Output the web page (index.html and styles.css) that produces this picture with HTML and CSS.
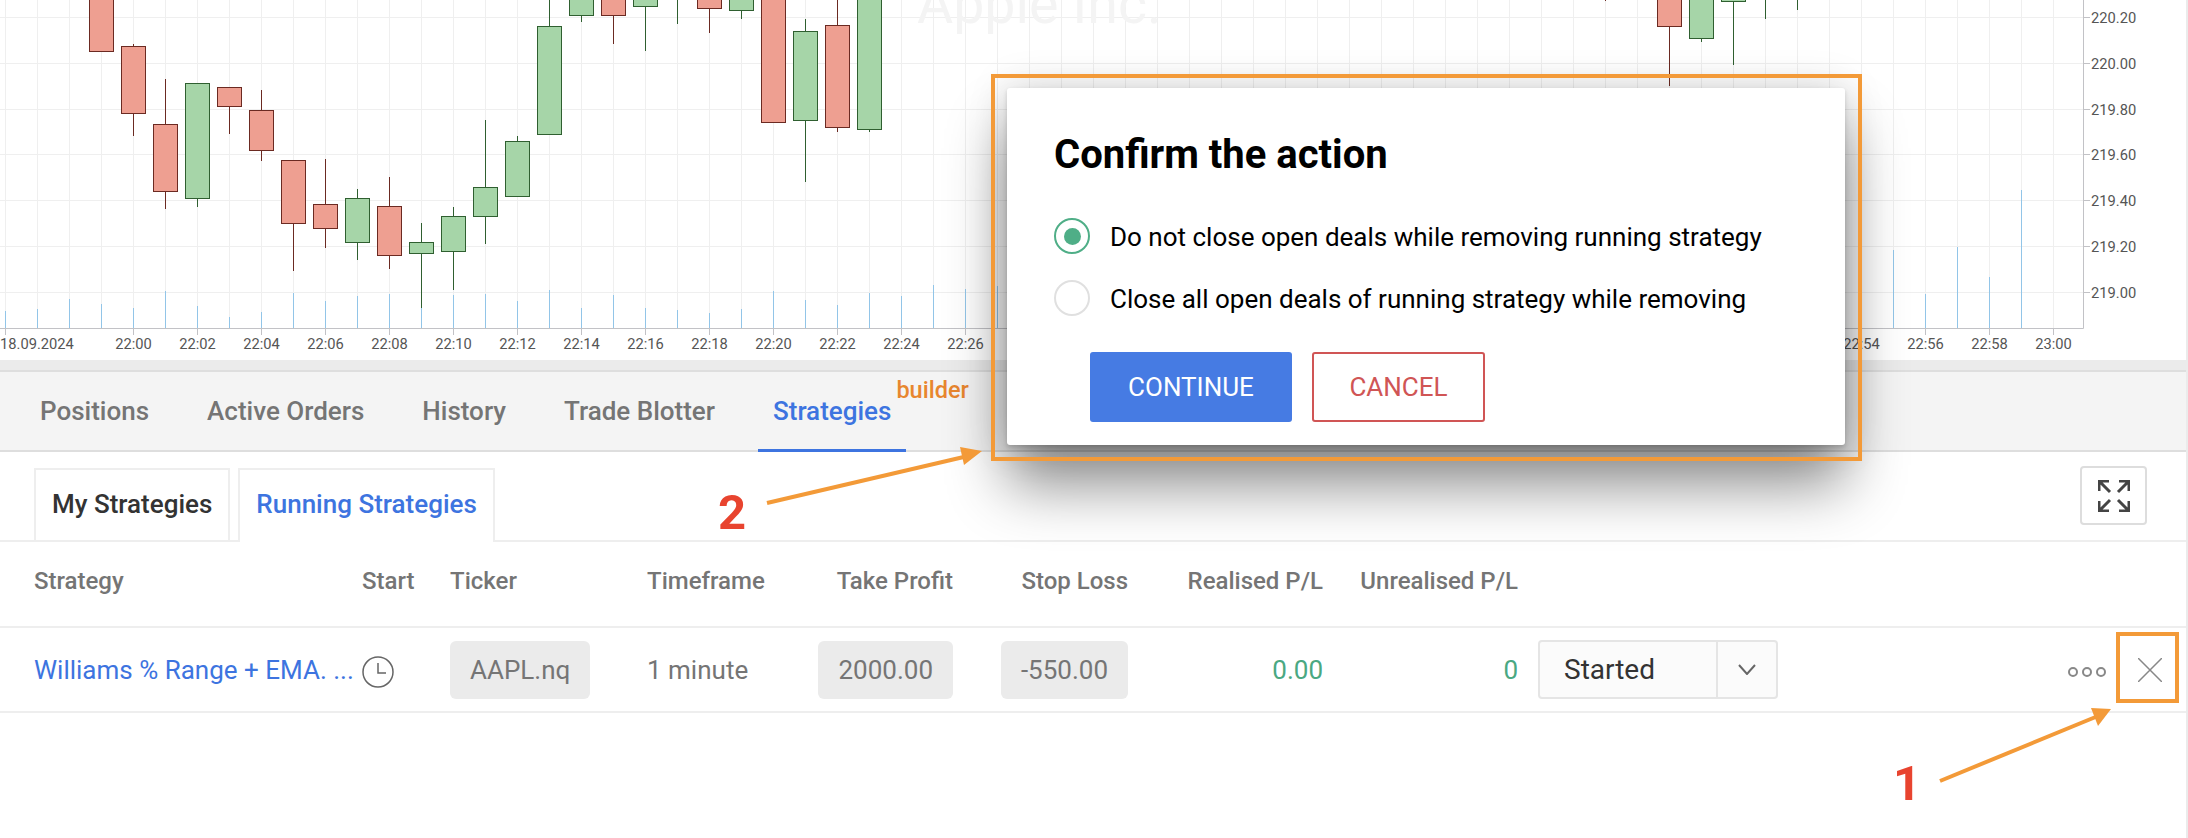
FILE: index.html
```html
<!DOCTYPE html>
<html lang="en">
<head>
    <meta charset="UTF-8">
    <title>Running Strategies</title>
    <link rel="stylesheet" href="styles.css">
</head>
<body>
    <section class="chart-panel">
        <svg class="chart" width="2186" height="360" viewBox="0 0 2186 360">
            <defs>
                <pattern id="grid-v" x="5" y="0" width="32" height="329" patternUnits="userSpaceOnUse">
                    <path class="grid" d="M.5 0V329"/>
                </pattern>
            </defs>
            <rect x="0" y="0" width="2083" height="328" fill="url(#grid-v)"/>
            <path class="grid" d="M0 17.5H2083M0 63.5H2083M0 109.5H2083M0 154.5H2083M0 200.5H2083M0 246.5H2083M0 292.5H2083"/>
            <text class="watermark" x="917" y="23">Apple Inc.</text>

            <path class="volume" d="M5.5 328V311M37.5 328V309M69.5 328V299M101.5 328V304M133.5 328V308M165.5 328V291M197.5 328V306M229.5 328V317M261.5 328V312M293.5 328V293M325.5 328V301M357.5 328V296M389.5 328V294M421.5 328V308M453.5 328V295M485.5 328V294M517.5 328V301M549.5 328V290M581.5 328V308M613.5 328V295M645.5 328V308M677.5 328V310M709.5 328V313M741.5 328V309M773.5 328V291M805.5 328V300M837.5 328V305M869.5 328V293M901.5 328V296M933.5 328V285M965.5 328V289M997.5 328V286M1893.5 328V250M1925.5 328V294M1957.5 328V247M1989.5 328V277M2021.5 328V190"/>

            <path class="wick-down" d="M133.5 44V136M165.5 79V209M229.5 88V134M261.5 90V161M293.5 161V271M325.5 159V248M389.5 177V269M613.5 0V44M709.5 0V33M837.5 0V132M1605.5 0V1M1669.5 0V86"/>
            <path class="wick-up" d="M197.5 84V207M357.5 189V260M421.5 223V308M453.5 207V290M485.5 120V244M517.5 136V142M549.5 0V27M581.5 0V22M645.5 0V51M677.5 0V24M741.5 0V19M805.5 19V182M869.5 0V132M1701.5 0V42M1733.5 0V65M1765.5 0V19M1797.5 0V10"/>

            <g class="candle-down">
                <rect x="89.5" y="-5" width="24" height="56.5"/>
                <rect x="121.5" y="46.5" width="24" height="67"/>
                <rect x="153.5" y="124.5" width="24" height="67"/>
                <rect x="217.5" y="87.5" width="24" height="19"/>
                <rect x="249.5" y="110.5" width="24" height="40"/>
                <rect x="281.5" y="160.5" width="24" height="63"/>
                <rect x="313.5" y="204.5" width="24" height="24"/>
                <rect x="377.5" y="206.5" width="24" height="49"/>
                <rect x="601.5" y="-5" width="24" height="20.5"/>
                <rect x="697.5" y="-5" width="24" height="13.5"/>
                <rect x="761.5" y="-5" width="24" height="127.5"/>
                <rect x="825.5" y="25.5" width="24" height="102"/>
                <rect x="1657.5" y="-5" width="24" height="31.5"/>
            </g>
            <g class="candle-up">
                <rect x="185.5" y="83.5" width="24" height="115"/>
                <rect x="345.5" y="198.5" width="24" height="44"/>
                <rect x="409.5" y="242.5" width="24" height="11"/>
                <rect x="441.5" y="216.5" width="24" height="35"/>
                <rect x="473.5" y="187.5" width="24" height="29"/>
                <rect x="505.5" y="141.5" width="24" height="55"/>
                <rect x="537.5" y="26.5" width="24" height="108"/>
                <rect x="569.5" y="-5" width="24" height="20.5"/>
                <rect x="633.5" y="-5" width="24" height="11.5"/>
                <rect x="729.5" y="-5" width="24" height="15.5"/>
                <rect x="793.5" y="31.5" width="24" height="89"/>
                <rect x="857.5" y="-5" width="24" height="134.5"/>
                <rect x="1689.5" y="-5" width="24" height="43.5"/>
                <rect x="1721.5" y="-5" width="24" height="6.5"/>
            </g>

            <path class="axis" d="M0 328.5H2083.5V0"/>
            <path class="axis" d="M5.5 329V335M133.5 329V335M197.5 329V335M261.5 329V335M325.5 329V335M389.5 329V335M453.5 329V335M517.5 329V335M581.5 329V335M645.5 329V335M709.5 329V335M773.5 329V335M837.5 329V335M901.5 329V335M965.5 329V335M1861.5 329V335M1925.5 329V335M1989.5 329V335M2053.5 329V335"/>
            <path class="axis" d="M2084 17.5H2090M2084 63.5H2090M2084 109.5H2090M2084 154.5H2090M2084 200.5H2090M2084 246.5H2090M2084 292.5H2090"/>

            <g class="axis-label">
                <text x="0" y="349">18.09.2024</text>
                <g class="time">
                    <text x="133.5" y="349">22:00</text>
                    <text x="197.5" y="349">22:02</text>
                    <text x="261.5" y="349">22:04</text>
                    <text x="325.5" y="349">22:06</text>
                    <text x="389.5" y="349">22:08</text>
                    <text x="453.5" y="349">22:10</text>
                    <text x="517.5" y="349">22:12</text>
                    <text x="581.5" y="349">22:14</text>
                    <text x="645.5" y="349">22:16</text>
                    <text x="709.5" y="349">22:18</text>
                    <text x="773.5" y="349">22:20</text>
                    <text x="837.5" y="349">22:22</text>
                    <text x="901.5" y="349">22:24</text>
                    <text x="965.5" y="349">22:26</text>
                    <text x="1861.5" y="349">22:54</text>
                    <text x="1925.5" y="349">22:56</text>
                    <text x="1989.5" y="349">22:58</text>
                    <text x="2053.5" y="349">23:00</text>
                </g>
                <text x="2091" y="23">220.20</text>
                <text x="2091" y="69">220.00</text>
                <text x="2091" y="115">219.80</text>
                <text x="2091" y="160">219.60</text>
                <text x="2091" y="206">219.40</text>
                <text x="2091" y="252">219.20</text>
                <text x="2091" y="298">219.00</text>
            </g>
        </svg>
    </section>

    <main class="bottom-panel">
        <nav class="tabs">
            <a class="tab">Positions</a>
            <a class="tab">Active Orders</a>
            <a class="tab">History</a>
            <a class="tab">Trade Blotter</a>
            <a class="tab tab-active">Strategies<span class="tab-badge">builder</span></a>
        </nav>

        <div class="subtabs">
            <a class="subtab">My Strategies</a>
            <a class="subtab subtab-active">Running Strategies</a>
            <button class="expand-btn">
                <svg width="32" height="32" viewBox="0 0 32 32">
                    <path d="M1 11V1H11M1 1L12 12M21 1H31V11M31 1L20 12M1 21V31H11M1 31L12 20M31 21V31H21M31 31L20 20"/>
                </svg>
            </button>
        </div>

        <div class="row row-head">
            <div>Strategy</div>
            <div>Start</div>
            <div>Ticker</div>
            <div>Timeframe</div>
            <div class="cell-right">Take Profit</div>
            <div class="cell-right">Stop Loss</div>
            <div class="cell-right">Realised P/L</div>
            <div class="cell-right">Unrealised P/L</div>
            <div></div>
        </div>

        <div class="row row-body">
            <div class="strategy-name">Williams % Range + EMA. ...</div>
            <div class="clock">
                <svg width="32" height="32" viewBox="0 0 32 32">
                    <circle cx="16" cy="16" r="15"/>
                    <path d="M16 7V17H24"/>
                </svg>
            </div>
            <div><span class="chip">AAPL.nq</span></div>
            <div>1 minute</div>
            <div class="cell-right"><span class="chip">2000.00</span></div>
            <div class="cell-right"><span class="chip">-550.00</span></div>
            <div class="cell-right profit">0.00</div>
            <div class="cell-right profit">0</div>
            <div class="actions">
                <div class="status-select">
                    <span class="status-value">Started</span>
                    <span class="status-arrow">
                        <svg width="18" height="11" viewBox="0 0 18 11"><path d="M1 1L9 10L17 1"/></svg>
                    </span>
                </div>
                <svg class="dots" width="38" height="12" viewBox="0 0 38 12">
                    <circle cx="5" cy="6" r="4"/>
                    <circle cx="19" cy="6" r="4"/>
                    <circle cx="33" cy="6" r="4"/>
                </svg>
                <svg class="close-icon" width="24" height="24" viewBox="0 0 24 24"><path d="M0 0L24 24M24 0L0 24"/></svg>
            </div>
        </div>
    </main>

    <div class="dialog">
        <h2 class="dialog-title">Confirm the action</h2>
        <label class="option"><span class="radio radio-on"></span>Do not close open deals while removing running strategy</label>
        <label class="option"><span class="radio"></span>Close all open deals of running strategy while removing</label>
        <div class="dialog-buttons">
            <button class="btn btn-primary">CONTINUE</button>
            <button class="btn btn-outline">CANCEL</button>
        </div>
    </div>

    <!-- annotations drawn on top of the screenshot -->
    <div class="mark mark-dialog"></div>
    <div class="mark mark-close"></div>
    <svg class="arrows" width="2188" height="838" viewBox="0 0 2188 838">
        <path class="arrow-line" d="M767 503L968 456"/>
        <path class="arrow-head" d="M982 451L960 447L964 465Z"/>
        <path class="arrow-line" d="M1940 781L2098 716"/>
        <path class="arrow-head" d="M2111 709L2091 708L2098 726Z"/>
    </svg>
    <span class="callout callout-two">2</span>
    <span class="callout callout-one">1</span>
</body>
</html>
```

FILE: styles.css
```css
* {
    box-sizing: border-box;
}
body {
    position: relative;
    width: 2188px;
    height: 838px;
    margin: 0;
    overflow: hidden;
    background-color: #ebebeb;
    font-family: 'Roboto', sans-serif;
    color: #757575;
}

/* chart */
.chart-panel {
    width: 2186px;
    height: 360px;
    background-color: #fff;
}
.chart {
    display: block;
}
.grid {
    fill: none;
    stroke: #efefef;
    stroke-width: 1;
}
.watermark {
    font-size: 55.5px;
    fill: #f4f4f4;
}
.volume {
    fill: none;
    stroke: #92c5e8;
}
.wick-down {
    fill: none;
    stroke: #6b2a22;
}
.wick-up {
    fill: none;
    stroke: #2f5f30;
}
.candle-down rect {
    fill: #ee9f91;
    stroke: #6b2a22;
}
.candle-up rect {
    fill: #a6d5a8;
    stroke: #2f5f30;
}
.axis {
    fill: none;
    stroke: #c2c2c6;
}
.axis-label {
    font-size: 14.7px;
    fill: #555;
}
.time {
    text-anchor: middle;
}

/* bottom panel */
.bottom-panel {
    width: 2186px;
    height: 478px;
    margin-top: 10px;
    border-top: 2px solid #dedede;
    background-color: #fff;
}
.tabs {
    display: flex;
    gap: 28px;
    height: 80px;
    padding-left: 25px;
    border-bottom: 2px solid #dedede;
    background-color: #f4f4f4;
}
.tab {
    position: relative;
    height: 80px;
    padding: 0 15px;
    font-size: 26px;
    font-weight: 500;
    line-height: 78px;
}
.tab-active {
    border-bottom: 3px solid #3d74e0;
    color: #3d74e0;
}
.tab-badge {
    position: absolute;
    top: 6px;
    left: calc(100% - 10px);
    font-size: 23.5px;
    line-height: 24px;
    color: #e8862e;
}

.subtabs {
    display: flex;
    align-items: flex-start;
    gap: 8px;
    height: 90px;
    padding: 16px 39px 0 34px;
    border-bottom: 2px solid #eee;
}
.subtab {
    height: 72px;
    padding: 0 16px;
    border: 2px solid #eee;
    border-bottom: none;
    font-size: 26px;
    font-weight: 500;
    line-height: 68px;
    color: #333;
}
.subtab-active {
    height: 74px;
    background-color: #fff;
    color: #3d74e0;
}
.expand-btn {
    display: flex;
    align-items: center;
    justify-content: center;
    width: 67px;
    height: 59px;
    margin: -2px 0 0 auto;
    padding: 0;
    border: 2px solid #ddd;
    border-radius: 4px;
    background-color: #fff;
}
.expand-btn path {
    fill: none;
    stroke: #444;
    stroke-width: 3;
}

/* table */
.row {
    display: grid;
    grid-template-columns: 328px 88px 197px 143px 163px 175px 195px 195px 668px;
    align-items: center;
    padding-left: 34px;
    border-bottom: 2px solid #eee;
}
.row-head {
    height: 86px;
    padding-bottom: 6px;
    font-size: 24px;
    font-weight: 500;
}
.row-body {
    height: 85px;
    font-size: 26px;
}
.cell-right {
    justify-self: end;
}
.strategy-name {
    color: #3d74e0;
}
.clock {
    height: 32px;
    margin-top: 4px;
}
.clock svg {
    display: block;
}
.clock circle,
.clock path {
    fill: none;
    stroke: #666;
    stroke-width: 1.5;
}
.chip {
    display: inline-block;
    height: 58px;
    padding: 0 20px;
    border-radius: 6px;
    background-color: #ebebeb;
    line-height: 58px;
}
.profit {
    color: #4aa882;
}
.actions {
    display: flex;
    align-items: center;
    padding: 0 24px 0 20px;
}
.status-select {
    display: flex;
    width: 240px;
    height: 59px;
    border: 2px solid #e5e5e5;
    border-radius: 4px;
    background-color: #fbfbfb;
}
.status-value {
    flex: 1;
    padding-left: 24px;
    font-size: 28px;
    line-height: 55px;
    color: #333;
}
.status-arrow {
    display: flex;
    align-items: center;
    justify-content: center;
    width: 60px;
    border-left: 2px solid #e5e5e5;
}
.status-arrow path {
    fill: none;
    stroke: #666;
    stroke-width: 2;
}
.dots {
    margin: 4px 32px 0 auto;
}
.dots circle {
    fill: none;
    stroke: #888;
    stroke-width: 2;
}
.close-icon path {
    fill: none;
    stroke: #888;
    stroke-width: 1.5;
}

/* dialog */
.dialog {
    position: absolute;
    top: 88px;
    left: 1007px;
    width: 838px;
    height: 357px;
    padding: 45px 47px 0;
    border-radius: 3px;
    background-color: #fff;
    color: #000;
    box-shadow: 0 2px 4px rgba(0, 0, 0, 0.15), 0 0 40px rgba(0, 0, 0, 0.15), 0 40px 60px rgba(0, 0, 0, 0.45);
}
.dialog-title {
    margin: 0 0 41px;
    font-size: 40px;
    font-weight: 700;
    line-height: 44px;
}
.option {
    display: flex;
    align-items: center;
    gap: 20px;
    height: 36px;
    margin-bottom: 26px;
    padding-top: 2px;
    font-size: 26px;
}
.radio {
    display: flex;
    align-items: center;
    justify-content: center;
    width: 36px;
    height: 36px;
    margin-top: -2px;
    border: 2px solid #e0e0e0;
    border-radius: 50%;
}
.radio-on {
    border-color: #4fae87;
}
.radio-on::after {
    content: "";
    width: 17px;
    height: 17px;
    border-radius: 50%;
    background-color: #4fae87;
}
.dialog-buttons {
    display: flex;
    gap: 20px;
    margin: 36px 0 0 36px;
}
.btn {
    height: 70px;
    border-radius: 3px;
    font-family: 'Roboto', sans-serif;
    font-size: 26px;
}
.btn-primary {
    width: 202px;
    border: none;
    background-color: #467be3;
    color: #fff;
}
.btn-outline {
    width: 173px;
    border: 2px solid #d05555;
    background-color: #fff;
    color: #d05555;
}

/* annotations */
.mark {
    position: absolute;
    border: 4px solid #f39a38;
}
.mark-dialog {
    top: 74px;
    left: 991px;
    width: 871px;
    height: 387px;
}
.mark-close {
    top: 632px;
    left: 2116px;
    width: 63px;
    height: 71px;
}
.arrows {
    position: absolute;
    top: 0;
    left: 0;
}
.arrow-line {
    fill: none;
    stroke: #f39a38;
    stroke-width: 4;
}
.arrow-head {
    fill: #f39a38;
}
.callout {
    position: absolute;
    font-size: 49px;
    font-weight: 700;
    line-height: 49px;
    color: #e8442f;
}
.callout-two {
    top: 488px;
    left: 718px;
}
.callout-one {
    top: 759px;
    left: 1893px;
}
```
